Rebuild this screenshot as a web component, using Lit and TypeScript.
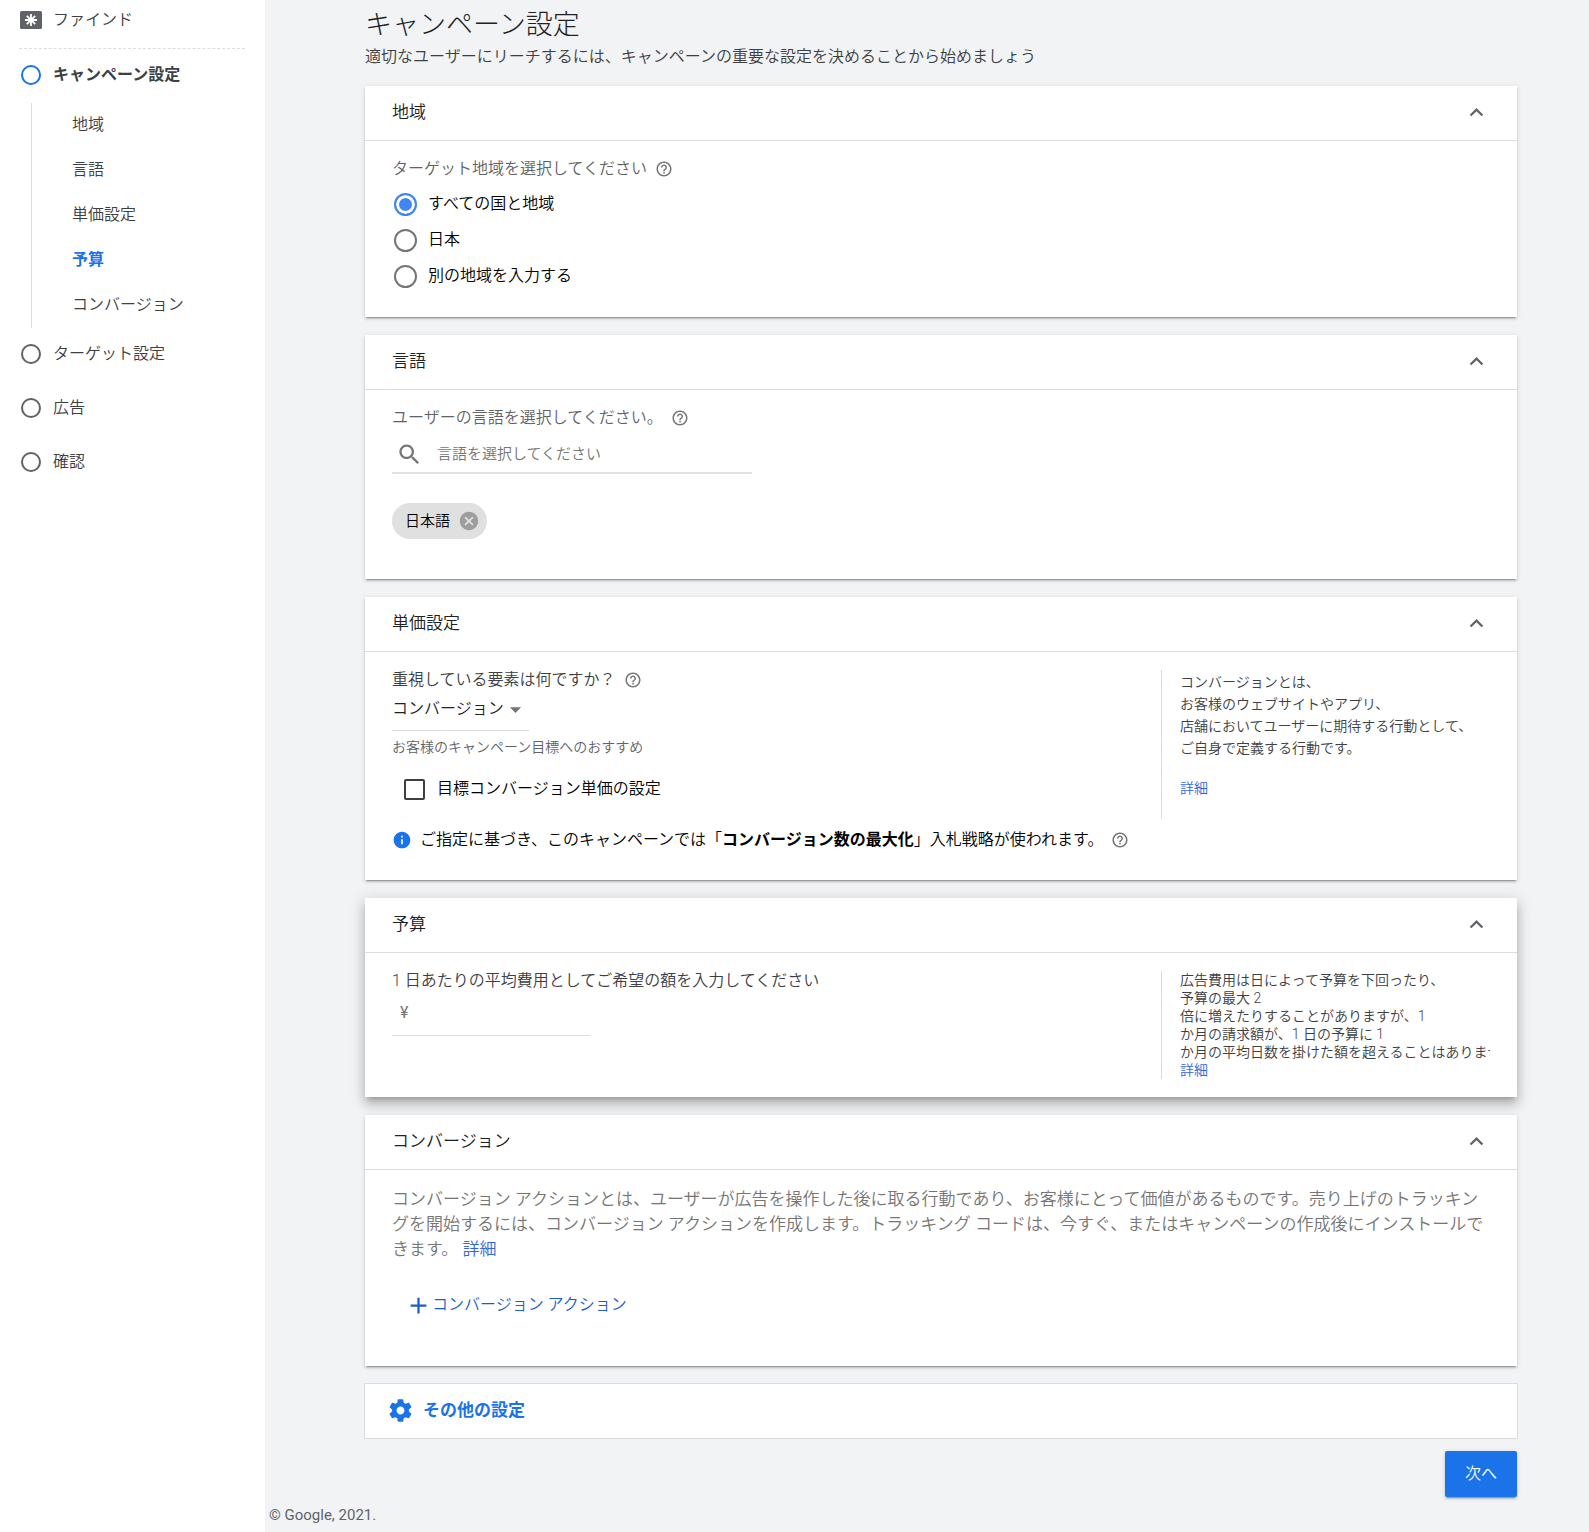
import { LitElement, html, css, svg, nothing, TemplateResult } from "lit";
import { customElement, property, state } from "lit/decorators.js";
import { classMap } from "lit/directives/class-map.js";

const ICONS = {
  expandLess: svg`<path d="M12 8l-6 6 1.41 1.41L12 10.83l4.59 4.58L18 14z"/>`,
  help: svg`<path d="M11 18h2v-2h-2v2zm1-16C6.48 2 2 6.48 2 12s4.48 10 10 10 10-4.48 10-10S17.52 2 12 2zm0 18c-4.41 0-8-3.59-8-8s3.59-8 8-8 8 3.59 8 8-3.59 8-8 8zm0-14c-2.21 0-4 1.79-4 4h2c0-1.1.9-2 2-2s2 .9 2 2c0 2-3 1.75-3 5h2c0-2.25 3-2.5 3-5 0-2.21-1.79-4-4-4z"/>`,
  search: svg`<path d="M15.5 14h-.79l-.28-.27C15.41 12.59 16 11.11 16 9.5 16 5.91 13.09 3 9.5 3S3 5.91 3 9.5 5.91 16 9.5 16c1.61 0 3.09-.59 4.23-1.57l.27.28v.79l5 4.99L20.49 19l-4.99-5zm-6 0C7.01 14 5 11.99 5 9.5S7.01 5 9.5 5 14 7.01 14 9.5 11.99 14 9.5 14z"/>`,
  cancel: svg`<path d="M12 2C6.47 2 2 6.47 2 12s4.47 10 10 10 10-4.47 10-10S17.53 2 12 2zm5 13.59L15.59 17 12 13.41 8.41 17 7 15.59 10.59 12 7 8.41 8.41 7 12 10.59 15.59 7 17 8.41 13.41 12 17 15.59z"/>`,
  dropDown: svg`<path d="M7 10l5 5 5-5z"/>`,
  info: svg`<path d="M12 2C6.48 2 2 6.48 2 12s4.48 10 10 10 10-4.48 10-10S17.52 2 12 2zm1 15h-2v-6h2v6zm0-8h-2V7h2v2z"/>`,
  add: svg`<path d="M19 13h-6v6h-2v-6H5v-2h6V5h2v6h6v2z"/>`,
  settings: svg`<path d="M19.43 12.98c.04-.32.07-.64.07-.98s-.03-.66-.07-.98l2.11-1.65c.19-.15.24-.42.12-.64l-2-3.46c-.12-.22-.39-.3-.61-.22l-2.49 1c-.52-.4-1.08-.73-1.69-.98l-.38-2.65C14.46 2.18 14.25 2 14 2h-4c-.25 0-.46.18-.49.42l-.38 2.65c-.61.25-1.17.59-1.69.98l-2.49-1c-.23-.09-.49 0-.61.22l-2 3.46c-.13.22-.07.49.12.64l2.11 1.65c-.04.32-.07.65-.07.98s.03.66.07.98l-2.11 1.65c-.19.15-.24.42-.12.64l2 3.46c.12.22.39.3.61.22l2.49-1c.52.4 1.08.73 1.69.98l.38 2.65c.03.24.24.42.49.42h4c.25 0 .46-.18.49-.42l.38-2.65c.61-.25 1.17-.59 1.69-.98l2.49 1c.23.09.49 0 .61-.22l2-3.46c.12-.22.07-.49-.12-.64l-2.11-1.65zM12 15.5c-1.93 0-3.5-1.57-3.5-3.5s1.57-3.5 3.5-3.5 3.5 1.57 3.5 3.5-1.57 3.5-3.5 3.5z"/>`,
};

const icon = (name: keyof typeof ICONS, cls: string) =>
  html`<svg class="icon ${cls}" viewBox="0 0 24 24" aria-hidden="true">${ICONS[name]}</svg>`;

const help = () =>
  html`<button class="plain help" type="button" aria-label="ヘルプ">${icon("help", "s18")}</button>`;

const shared = css`
  * {
    box-sizing: border-box;
  }
  button,
  input,
  select {
    font: inherit;
    color: inherit;
    margin: 0;
  }
  .icon {
    display: block;
    flex: none;
    fill: currentColor;
  }
  .s18 {
    width: 18px;
    height: 18px;
  }
  .s20 {
    width: 20px;
    height: 20px;
  }
  .s22 {
    width: 22px;
    height: 22px;
  }
  .s27 {
    width: 27px;
    height: 27px;
  }
  .plain {
    display: block;
    flex: none;
    border: 0;
    padding: 0;
    background: none;
    cursor: pointer;
  }
  .help {
    color: #757575;
  }
  a {
    color: #3367d6;
    text-decoration: none;
  }
`;

@customElement("side-nav")
class SideNav extends LitElement {
  static styles = [
    shared,
    css`
      :host {
        display: block;
        background: #fff;
        color: #3c4043;
      }
      .type {
        display: flex;
        align-items: center;
        gap: 11px;
        margin: 0 20px 0 19px;
        height: 49px;
        padding: 0 0 8px 1px;
        border-bottom: 1px dashed #dadce0;
      }
      .type-icon {
        display: block;
        width: 22px;
        height: 18px;
      }
      .step {
        display: flex;
        align-items: center;
        gap: 12px;
        height: 54px;
        padding: 0 0 2px 21px;
        color: inherit;
      }
      .dot {
        width: 20px;
        height: 20px;
        border: 2px solid #5f6368;
        border-radius: 50%;
      }
      .current {
        font-weight: 700;
      }
      .current .dot {
        border-color: #1a73e8;
      }
      .subs {
        margin-left: 31px;
        border-left: 1px solid #dadce0;
      }
      .sub {
        display: block;
        padding: 0 0 2px 40px;
        line-height: 43px;
        color: inherit;
      }
      .active {
        color: #1a73e8;
        font-weight: 700;
      }
    `,
  ];

  private subs = ["地域", "言語", "単価設定", "予算", "コンバージョン"];
  private steps = ["ターゲット設定", "広告", "確認"];

  render() {
    return html`<nav>
      <div class="type">
        <svg class="type-icon" viewBox="0 0 22 18" aria-hidden="true">
          <rect width="22" height="18" rx="1.5" fill="#5f6368" />
          <path
            d="M11 3v12M5 9h12M6.8 4.8l8.4 8.4M15.2 4.8l-8.4 8.4"
            stroke="#fff"
            stroke-width="1.8"
          />
        </svg>
        <span>ファインド</span>
      </div>
      <a class="step current" href="#campaign"><span class="dot"></span>キャンペーン設定</a>
      <div class="subs">
        ${this.subs.map(
          (s) => html`<a class=${classMap({ sub: true, active: s === "予算" })} href="#${s}">${s}</a>`
        )}
      </div>
      ${this.steps.map((s) => html`<a class="step" href="#${s}"><span class="dot"></span>${s}</a>`)}
    </nav>`;
  }
}

@customElement("settings-card")
class SettingsCard extends LitElement {
  @property() heading = "";
  @property({ type: Boolean, reflect: true }) raised = false;
  @state() private open = true;

  static styles = [
    shared,
    css`
      :host {
        display: block;
        background: #fff;
        box-shadow: 0 3px 1px -2px rgba(0, 0, 0, 0.2), 0 2px 2px rgba(0, 0, 0, 0.14),
          0 1px 5px rgba(0, 0, 0, 0.12);
      }
      :host([raised]) {
        box-shadow: 0 5px 5px -3px rgba(0, 0, 0, 0.2), 0 8px 10px 1px rgba(0, 0, 0, 0.14),
          0 3px 14px 2px rgba(0, 0, 0, 0.12);
      }
      .head {
        display: flex;
        align-items: center;
        justify-content: space-between;
        height: 55px;
        padding: 0 27px 2px;
        border-bottom: 1px solid #dadce0;
        color: #202124;
      }
      .title {
        margin: 0;
        font-size: 17px;
        font-weight: inherit;
      }
      .toggle {
        color: #5f6368;
      }
    `,
  ];

  render() {
    return html`
      <header class="head">
        <h2 class="title">${this.heading}</h2>
        <button
          class="plain toggle"
          type="button"
          aria-label=${this.heading}
          aria-expanded=${this.open}
          @click=${() => (this.open = !this.open)}
        >
          ${icon("expandLess", "s27")}
        </button>
      </header>
      ${this.open ? html`<slot></slot>` : nothing}
    `;
  }
}

@customElement("app-root")
class AppRoot extends LitElement {
  @state() private region = 0;
  @state() private languages = ["日本語"];

  static styles = [
    shared,
    css`
      :host {
        display: grid;
        grid-template-columns: 265px minmax(0, 1fr);
        min-height: 100vh;
        background: #f1f3f4;
        font: 350 16px/24px Roboto, "Noto Sans CJK JP", sans-serif;
        color: #3c4043;
      }
      .main {
        padding: 7px 72px 0 100px;
      }
      .page-title {
        margin: 0;
        font-size: 27px;
        line-height: 36px;
        font-weight: 300;
        color: #202124;
      }
      .lead {
        margin: 0 0 15px;
        line-height: 28px;
      }
      .cards {
        display: flex;
        flex-direction: column;
        gap: 18px;
      }
      .body {
        padding: 16px 27px 0;
      }
      .label {
        display: flex;
        align-items: center;
        gap: 8px;
      }
      .muted {
        color: #5f6368;
      }
      .radios {
        margin: 0;
        padding: 5px 0 23px 2px;
        border: 0;
        color: #000;
      }
      .radio-row {
        display: flex;
        align-items: center;
        gap: 11px;
        height: 36px;
      }
      .radio {
        appearance: none;
        width: 23px;
        height: 23px;
        border: 2px solid #757575;
        border-radius: 50%;
      }
      .radio:checked {
        border-color: #4285f4;
        background: #4285f4;
        box-shadow: inset 0 0 0 3px #fff;
      }
      .search {
        display: flex;
        align-items: center;
        gap: 14px;
        width: 360px;
        max-width: 100%;
        margin-top: 6px;
        height: 38px;
        padding-left: 4px;
        border-bottom: 2px solid #e0e0e0;
        color: #757575;
      }
      .field {
        flex: 1;
        min-width: 0;
        height: 34px;
        padding: 0;
        border: 0;
        outline: 0;
        background: none;
        color: #202124;
      }
      .search .field {
        font-size: 15px;
      }
      .field::placeholder {
        color: #757575;
        opacity: 1;
      }
      .chips {
        display: flex;
        gap: 8px;
        min-height: 36px;
        padding: 29px 0 40px;
      }
      .chip {
        display: flex;
        align-items: center;
        gap: 8px;
        height: 36px;
        padding: 0 7px 0 13px;
        border-radius: 18px;
        background: #e0e0e0;
        font-size: 15px;
        color: #000;
      }
      .remove {
        color: #9e9e9e;
      }
      .split {
        display: grid;
        grid-template-columns: minmax(0, 1fr) 329px;
        align-items: start;
        padding: 0 27px;
      }
      .primary {
        padding-top: 16px;
      }
      .select-wrap {
        display: grid;
        align-items: center;
        justify-items: end;
        width: 137px;
        height: 39px;
        padding-bottom: 4px;
        border-bottom: 1px solid #dadce0;
        color: #757575;
      }
      .select-wrap > * {
        grid-area: 1 / 1;
      }
      .select {
        appearance: none;
        width: 100%;
        height: 34px;
        padding: 0;
        border: 0;
        background: none;
        color: #202124;
      }
      .caret {
        pointer-events: none;
      }
      .hint {
        margin: 4px 0 18px;
        font-size: 14px;
        color: #5f6368;
      }
      .check-row {
        display: flex;
        align-items: center;
        gap: 12px;
        padding-left: 12px;
        color: #000;
      }
      .check {
        appearance: none;
        width: 21px;
        height: 21px;
        border: 2px solid #3c4043;
        border-radius: 2px;
      }
      .check:checked {
        background: #3c4043;
        box-shadow: inset 0 0 0 3px #fff;
      }
      .strategy {
        display: flex;
        align-items: center;
        gap: 8px;
        margin: 27px 0 28px;
        color: #000;
      }
      .info {
        color: #1a73e8;
      }
      .side {
        margin: 18px 0;
        padding-left: 18px;
        border-left: 1px solid #dadce0;
        font-size: 14px;
        line-height: 18px;
      }
      .side-text {
        margin: 0;
        overflow: hidden;
        white-space: pre;
      }
      .side .link {
        display: block;
      }
      .loose {
        padding: 1px 0 20px 18px;
        line-height: 22px;
      }
      .loose .side-text {
        margin-bottom: 18px;
      }
      .money {
        display: flex;
        align-items: center;
        gap: 8px;
        width: 198px;
        height: 43px;
        padding: 0 0 2px 8px;
        border-bottom: 1px solid #dadce0;
        color: #757575;
        font-weight: 400;
      }
      .about {
        margin: 0;
        padding-top: 1px;
        font-size: 17px;
        line-height: 25px;
        color: #757575;
      }
      .add {
        display: flex;
        align-items: center;
        height: 36px;
        margin: 25px 0 0 13px;
        color: #1a5dd0;
      }
      .tall {
        padding-bottom: 43px;
      }
      .more {
        display: flex;
        align-items: center;
        gap: 9px;
        width: 100%;
        height: 54px;
        padding: 0 22px 2px;
        background: #fff;
        box-shadow: 0 0 0 1px #dadce0;
        font-size: 17px;
        font-weight: 700;
        color: #1a73e8;
      }
      .actions {
        display: flex;
        justify-content: flex-end;
        margin-top: 13px;
      }
      .next {
        height: 46px;
        padding: 0 20px;
        border: 0;
        border-radius: 2px;
        background: #1a73e8;
        box-shadow: 0 3px 1px -2px rgba(0, 0, 0, 0.2), 0 2px 2px rgba(0, 0, 0, 0.14),
          0 1px 5px rgba(0, 0, 0, 0.12);
        color: #fff;
        cursor: pointer;
      }
      .footer {
        margin: 8px 0 0 -96px;
        padding-bottom: 7px;
        font-size: 15px;
        line-height: 20px;
        font-weight: 400;
        color: #5f6368;
      }
    `,
  ];

  private regions = ["すべての国と地域", "日本", "別の地域を入力する"];

  private aside(lines: string[], loose = false): TemplateResult {
    return html`<aside class=${classMap({ side: true, loose })}>
      <p class="side-text">${lines.join("\n")}</p>
      <a class="link" href="#help">詳細</a>
    </aside>`;
  }

  render() {
    return html`
      <side-nav></side-nav>
      <main class="main">
        <h1 class="page-title">キャンペーン設定</h1>
        <p class="lead">適切なユーザーにリーチするには、キャンペーンの重要な設定を決めることから始めましょう</p>
        <div class="cards">
          <settings-card heading="地域">
            <div class="body">
              <div class="label muted"><span id="region">ターゲット地域を選択してください</span>${help()}</div>
              <fieldset class="radios" aria-labelledby="region">
                ${this.regions.map(
                  (r, i) => html`<label class="radio-row">
                    <input
                      class="radio"
                      type="radio"
                      name="region"
                      .checked=${i === this.region}
                      @change=${() => (this.region = i)}
                    />${r}
                  </label>`
                )}
              </fieldset>
            </div>
          </settings-card>

          <settings-card heading="言語">
            <div class="body">
              <div class="label muted"><label for="lang">ユーザーの言語を選択してください。</label>${help()}</div>
              <div class="search">
                ${icon("search", "s27")}
                <input class="field" id="lang" type="text" placeholder="言語を選択してください" />
              </div>
              <div class="chips">
                ${this.languages.map(
                  (l) => html`<span class="chip"
                    >${l}<button
                      class="plain remove"
                      type="button"
                      aria-label="${l}を削除"
                      @click=${() => (this.languages = this.languages.filter((x) => x !== l))}
                    >
                      ${icon("cancel", "s22")}
                    </button></span
                  >`
                )}
              </div>
            </div>
          </settings-card>

          <settings-card heading="単価設定">
            <div class="split">
              <div class="primary">
                <div class="label"><label for="focus">重視している要素は何ですか？</label>${help()}</div>
                <div class="select-wrap">
                  <select class="select" id="focus">
                    <option>コンバージョン</option>
                  </select>
                  ${icon("dropDown", "s27 caret")}
                </div>
                <p class="hint">お客様のキャンペーン目標へのおすすめ</p>
                <label class="check-row"
                  ><input class="check" type="checkbox" />目標コンバージョン単価の設定</label
                >
                <div class="strategy">
                  ${icon("info", "s20 info")}
                  <span
                    >ご指定に基づき、このキャンペーンでは「<b>コンバージョン数の最大化</b>」入札戦略が使われます。</span
                  >${help()}
                </div>
              </div>
              ${this.aside(
                [
                  "コンバージョンとは、",
                  "お客様のウェブサイトやアプリ、",
                  "店舗においてユーザーに期待する行動として、",
                  "ご自身で定義する行動です。",
                ],
                true
              )}
            </div>
          </settings-card>

          <settings-card heading="予算" raised>
            <div class="split">
              <div class="primary">
                <label class="label" for="budget">1 日あたりの平均費用としてご希望の額を入力してください</label>
                <div class="money">
                  <span>¥</span>
                  <input class="field" id="budget" type="text" inputmode="numeric" />
                </div>
              </div>
              ${this.aside([
                "広告費用は日によって予算を下回ったり、",
                "予算の最大 2",
                "倍に増えたりすることがありますが、1",
                "か月の請求額が、1 日の予算に 1",
                "か月の平均日数を掛けた額を超えることはありませ",
              ])}
            </div>
          </settings-card>

          <settings-card heading="コンバージョン">
            <div class="body tall">
              <p class="about">
                コンバージョン アクションとは、ユーザーが広告を操作した後に取る行動であり、お客様にとって価値があるものです。売り上げのトラッキングを開始するには、コンバージョン アクションを作成します。トラッキング コードは、今すぐ、またはキャンペーンの作成後にインストールできます。
                <a href="#help">詳細</a>
              </p>
              <button class="plain add" type="button">${icon("add", "s27")}コンバージョン アクション</button>
            </div>
          </settings-card>

          <button class="plain more" type="button">${icon("settings", "s27")}その他の設定</button>
        </div>
        <div class="actions"><button class="next" type="button">次へ</button></div>
        <footer class="footer">© Google, 2021.</footer>
      </main>
    `;
  }
}
